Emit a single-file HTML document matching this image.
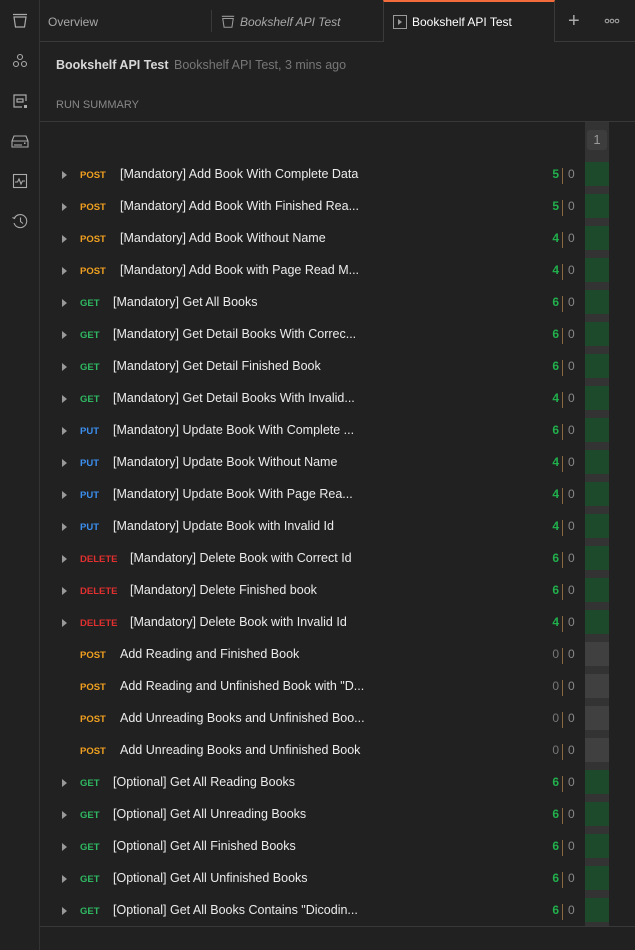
<!DOCTYPE html>
<html><head><meta charset="utf-8"><style>
*{margin:0;padding:0;box-sizing:border-box}
body{width:635px;height:950px;background:#212121;font-family:"Liberation Sans",sans-serif;position:relative;overflow:hidden;color:#e8e8e8}
.side{position:absolute;left:0;top:0;width:40px;height:950px;background:#212121;border-right:1px solid #333}
.tabs{position:absolute;left:40px;top:0;width:595px;height:42px;border-bottom:1px solid #3a3a3a}
.t{position:absolute;top:1px;height:42px;line-height:42px;font-size:12px;color:#a8a8a8}
.abs{position:absolute}
.row{position:absolute;left:0;width:635px;height:32px}
.tri{position:absolute;left:62px;top:12px;width:0;height:0;border-left:5px solid #999;border-top:4px solid transparent;border-bottom:4px solid transparent}
.m{position:absolute;left:80px;top:11px;font-size:9.5px;font-weight:bold}
.POST{color:#f0a020}.GET{color:#2fb862}.PUT{color:#3b8ff0}.DELETE{color:#e03030}
.n{position:absolute;top:8px;font-size:12.5px;color:#ececec;white-space:nowrap}
.c{position:absolute;right:76px;top:8px;font-size:12px;font-weight:bold;color:#21b04c}
.c.z{color:#777;font-weight:normal}
.bar{position:absolute;left:562px;top:9px;width:1px;height:16px;background:#8a6a40}
.zero{position:absolute;left:568px;top:8px;font-size:12px;color:#888}
.blk{position:absolute;left:585px;top:3px;width:24px;height:24px;background:#1e4a2c}
.blk.g{background:#404040}
</style></head><body>
<div class="side">
<svg class="abs" style="left:12px;top:13px" width="16" height="16" viewBox="0 0 16 16" fill="none" stroke="#aaa" stroke-width="1.2"><path d="M1 1.5h14M2 4h12l-1.5 10h-9z"/></svg>
<svg class="abs" style="left:12px;top:53px" width="16" height="16" viewBox="0 0 16 16" fill="none" stroke="#aaa" stroke-width="1.1"><circle cx="8" cy="4" r="2.5"/><circle cx="4" cy="11" r="2.5"/><circle cx="12" cy="11" r="2.5"/></svg>
<svg class="abs" style="left:12px;top:93px" width="16" height="16" viewBox="0 0 16 16" fill="none" stroke="#aaa" stroke-width="1.2"><path d="M14 8V2H2v12h8"/><path d="M5 6h6v3H5z"/><rect x="12" y="12" width="3" height="3" fill="#aaa" stroke="none"/></svg>
<svg class="abs" style="left:11px;top:133px" width="18" height="16" viewBox="0 0 18 16" fill="none" stroke="#aaa" stroke-width="1.1"><path d="M3 3h12l2 5v6H1V8z M1 8h16 M4 11v2 M6 11v2 M8 11v2 M10 11v2"/><rect x="13" y="9.5" width="1.5" height="1.5" fill="#aaa" stroke="none"/></svg>
<svg class="abs" style="left:12px;top:173px" width="16" height="16" viewBox="0 0 16 16" fill="none" stroke="#aaa" stroke-width="1.1"><rect x="1.5" y="1.5" width="13" height="13"/><path d="M3 9h2.5l1.5-3 2 5 1.5-3H13"/></svg>
<svg class="abs" style="left:11px;top:212px" width="18" height="18" viewBox="0 0 18 18" fill="none" stroke="#aaa" stroke-width="1.1"><path d="M3.5 6A6.5 6.5 0 1 1 3 11"/><path d="M1.5 5.5l2 1 1-2"/><path d="M9.5 5.5v4l2.5 2"/></svg>
</div>
<div class="tabs">
<div class="t" style="left:8px">Overview</div>
<div class="abs" style="left:171px;top:10px;width:1px;height:22px;background:#3a3a3a"></div>
<svg class="abs" style="left:181px;top:15px" width="14" height="14" viewBox="0 0 16 16" fill="none" stroke="#999" stroke-width="1.2"><path d="M1 1.5h14M2 4h12l-1.5 10h-9z"/></svg>
<div class="t" style="left:200px;font-style:italic">Bookshelf API Test</div>
<div class="abs" style="left:343px;top:0;width:172px;height:42px;background:#212121;border-left:1px solid #3a3a3a;border-right:1px solid #3a3a3a;border-top:2px solid #f26b3a"></div>
<svg class="abs" style="left:353px;top:15px" width="14" height="14" viewBox="0 0 14 14"><rect x="0.5" y="0.5" width="13" height="13" fill="none" stroke="#999"/><path d="M5 4l4 3-4 3z" fill="#999"/></svg>
<div class="t" style="left:372px;color:#fff">Bookshelf API Test</div>
<div class="t" style="left:528px;font-size:20px;color:#aaa;line-height:40px">+</div>
<svg class="abs" style="left:564px;top:18px" width="16" height="6" viewBox="0 0 16 6" fill="none" stroke="#aaa"><circle cx="3" cy="3" r="1.8"/><circle cx="8" cy="3" r="1.8"/><circle cx="13" cy="3" r="1.8"/></svg>
</div>
<div class="abs" style="left:56px;top:58px;font-size:12.5px;font-weight:bold;color:#d8d8d8">Bookshelf API Test <span style="font-weight:normal;color:#777;margin-left:2px">Bookshelf API Test, 3 mins ago</span></div>
<div class="abs" style="left:56px;top:99px;font-size:11px;color:#888">RUN SUMMARY</div>
<div class="abs" style="left:40px;top:121px;width:595px;height:1px;background:#383838"></div>
<div class="abs" style="left:585px;top:122px;width:24px;height:804px;background:#333"></div>
<div class="abs" style="left:587px;top:130px;width:20px;height:20px;background:#3d3d3d;border-radius:3px;color:#999;font-size:13px;text-align:center;line-height:20px">1</div>
<div class="abs" style="left:40px;top:926px;width:595px;height:1px;background:#383838"></div>
<div id="rows"></div>
<script>
var d=[["POST","[Mandatory] Add Book With Complete Data",5],["POST","[Mandatory] Add Book With Finished Rea...",5],["POST","[Mandatory] Add Book Without Name",4],["POST","[Mandatory] Add Book with Page Read M...",4],["GET","[Mandatory] Get All Books",6],["GET","[Mandatory] Get Detail Books With Correc...",6],["GET","[Mandatory] Get Detail Finished Book",6],["GET","[Mandatory] Get Detail Books With Invalid...",4],["PUT","[Mandatory] Update Book With Complete ...",6],["PUT","[Mandatory] Update Book Without Name",4],["PUT","[Mandatory] Update Book With Page Rea...",4],["PUT","[Mandatory] Update Book with Invalid Id",4],["DELETE","[Mandatory] Delete Book with Correct Id",6],["DELETE","[Mandatory] Delete Finished book",6],["DELETE","[Mandatory] Delete Book with Invalid Id",4],["POST","Add Reading and Finished Book",0],["POST","Add Reading and Unfinished Book with \"D...",0],["POST","Add Unreading Books and Unfinished Boo...",0],["POST","Add Unreading Books and Unfinished Book",0],["GET","[Optional] Get All Reading Books",6],["GET","[Optional] Get All Unreading Books",6],["GET","[Optional] Get All Finished Books",6],["GET","[Optional] Get All Unfinished Books",6],["GET","[Optional] Get All Books Contains \"Dicodin...",6]];
var L={POST:120,GET:113,PUT:113,DELETE:130},h="";
d.forEach(function(r,i){var y=159+i*32,z=r[2]==0;
h+='<div class="row" style="top:'+y+'px">'+(z?'':'<div class="tri"></div>')+'<div class="m '+r[0]+'">'+r[0]+'</div><div class="n" style="left:'+L[r[0]]+'px">'+r[1].replace(/"/g,'&quot;')+'</div><div class="c'+(z?' z':'')+'">'+r[2]+'</div><div class="bar"></div><div class="zero">0</div><div class="blk'+(z?' g':'')+'"></div></div>';});
document.getElementById("rows").innerHTML=h;
</script>
</body></html>
